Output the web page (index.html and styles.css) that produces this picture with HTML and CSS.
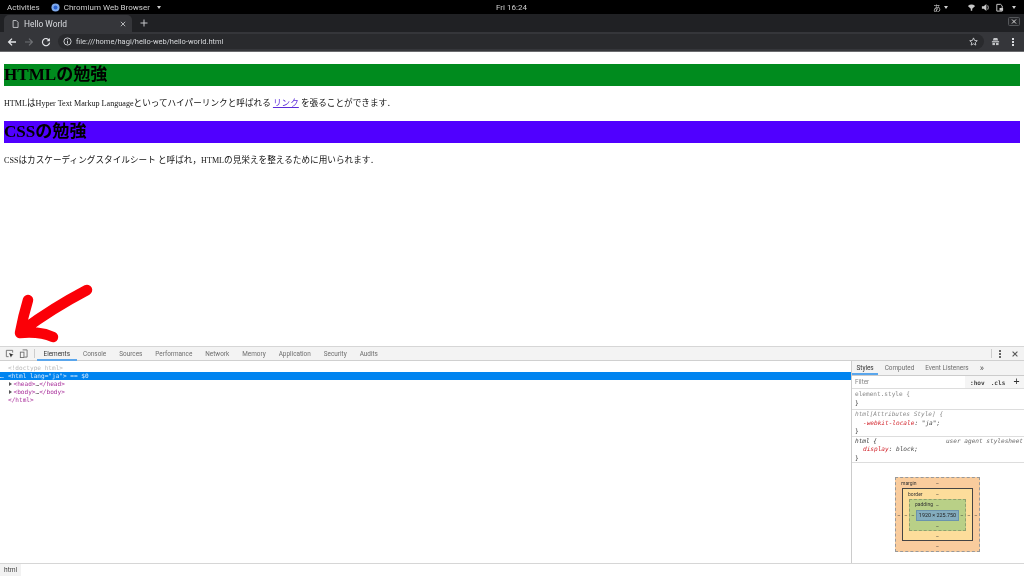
FILE: index.html
```html
<!DOCTYPE html>
<html lang="ja">
<head>
<meta charset="utf-8">
<title>Hello World</title>
<link rel="stylesheet" href="styles.css">
</head>
<body>
<div class="screen">
  <header class="topbar">
    <div class="top-left">
      <span>Activities</span>
      <span class="app-menu">
        <svg class="app-logo" viewBox="0 0 10 10"><circle cx="5" cy="5" r="4.5" fill="#7fa9ea"/><circle cx="5" cy="5" r="2.2" fill="#2a62d0"/></svg>
        Chromium Web Browser
        <i class="caret"></i>
      </span>
    </div>
    <div class="top-clock">Fri 16:24</div>
    <div class="top-right">
      <span class="ime">あ<i class="caret"></i></span>
      <span class="status">
        <svg class="st-icon" viewBox="0 0 10 10"><path d="M1 3.2 Q5 .2 9 3.2 L5.8 6.4 V8.6 H4.2 V6.4 Z" fill="#c8c8c8"/></svg>
        <svg class="st-icon" viewBox="0 0 10 10"><path d="M1 3.6H3L6 1V9L3 6.4H1Z" fill="#c8c8c8"/><path d="M7.2 2.6Q9.2 5 7.2 7.4" fill="none" stroke="#8a8a8a" stroke-width="1.2"/></svg>
        <svg class="st-icon" viewBox="0 0 10 10"><path d="M2 1.5H6.2L8 3.2V9H2Z" fill="none" stroke="#c8c8c8" stroke-width="1.1"/><path d="M5 5.5H9V8.5H5Z" fill="#c8c8c8"/></svg>
        <i class="caret"></i>
      </span>
    </div>
  </header>

  <div class="tabstrip">
    <div class="tab">
      <svg class="tab-doc" viewBox="0 0 8 10"><path d="M1 .7H5L7.2 2.9V9.3H1Z" fill="none" stroke="#dadce0" stroke-width="1"/></svg>
      <span class="tab-title">Hello World</span>
      <svg class="tab-close" viewBox="0 0 6 6"><path d="M.8.8 5.2 5.2M5.2.8.8 5.2" stroke="#b4b6b9" stroke-width="1"/></svg>
    </div>
    <svg class="tab-new" viewBox="0 0 8 8"><path d="M4 .5V7.5M.5 4H7.5" stroke="#c4c6c9" stroke-width="1"/></svg>
    <svg class="win-close" viewBox="0 0 12 9"><rect x=".5" y=".5" width="11" height="8" rx="1" fill="#26272a" stroke="#55575a"/><path d="M4 2.5 8 6.5M8 2.5 4 6.5" stroke="#dcdcdc"/></svg>
  </div>

  <div class="toolbar">
    <svg class="nav" viewBox="0 0 10 10"><path d="M9 5H2M5 1.6 1.6 5 5 8.4" fill="none" stroke="#e4e6e9" stroke-width="1.3"/></svg>
    <svg class="nav" viewBox="0 0 10 10"><path d="M1 5H8M5 1.6 8.4 5 5 8.4" fill="none" stroke="#6f7175" stroke-width="1.2"/></svg>
    <svg class="nav" viewBox="0 0 10 10"><path d="M8.2 3.4A3.6 3.6 0 1 0 8.6 5.6" fill="none" stroke="#e4e6e9" stroke-width="1.2"/><path d="M8.9 .9V4.3H5.6Z" fill="#e4e6e9"/></svg>
    <div class="omnibox">
      <svg class="info" viewBox="0 0 10 10"><circle cx="5" cy="5" r="4" fill="none" stroke="#dadce0" stroke-width="1"/><path d="M5 4.3V7.4M5 2.6V3.6" stroke="#dadce0" stroke-width="1"/></svg>
      <span class="url">file:///home/hagi/hello-web/hello-world.html</span>
      <svg class="star" viewBox="0 0 10 10"><path d="M5 1 6.2 3.8 9.2 4.1 7 6.1 7.6 9 5 7.5 2.4 9 3 6.1.8 4.1 3.8 3.8Z" fill="none" stroke="#dadce0" stroke-width=".9"/></svg>
    </div>
    <svg class="ext" viewBox="0 0 10 10"><path d="M3 1.2H7L8 4H2Z" fill="#c4c6c9"/><rect x="1" y="4.6" width="8" height="1.4" fill="#c4c6c9"/><rect x="1.6" y="6.6" width="2.8" height="2.4" fill="#c4c6c9"/><rect x="5.6" y="6.6" width="2.8" height="2.4" fill="#c4c6c9"/></svg>
    <span class="dots light"><i></i><i></i><i></i></span>
  </div>

  <main class="page">
    <h1 class="h-green">HTMLの勉強</h1>
    <p><span class="lat">HTML</span>は<span class="lat">Hyper Text Markup Language</span>といってハイパーリンクと呼ばれる <a href="#">リンク</a> を張ることができます．</p>
    <h1 class="h-purple">CSSの勉強</h1>
    <p><span class="lat">CSS</span>はカスケーディングスタイルシート と呼ばれ，<span class="lat">HTML</span>の見栄えを整えるために用いられます．</p>
    <svg class="arrow" viewBox="0 0 100 70"><path d="M79 10 C60 20 38 33 15 50 M20 20 C17 30 14 42 12 53 C24 52 34 52 45 57" fill="none" stroke="#fb0007" stroke-width="10.5" stroke-linecap="round" stroke-linejoin="round"/></svg>
  </main>

  <section class="devtools">
    <div class="dt-bar">
      <svg class="dt-icon" viewBox="0 0 10 10"><path d="M8.5 4V1.5H1.5V8.5H4" fill="none" stroke="#6e6e6e"/><path d="M4.5 4.5 9.5 6.4 7.6 7.2 6.6 9.4Z" fill="#333"/></svg>
      <svg class="dt-icon" viewBox="0 0 10 10"><path d="M4 1H9V9H6" fill="none" stroke="#6e6e6e"/><rect x="1.5" y="3.5" width="4" height="6" fill="none" stroke="#6e6e6e"/></svg>
      <span class="dt-sep"></span>
      <nav class="dt-tabs">
        <span class="dt-tab active">Elements</span>
        <span class="dt-tab">Console</span>
        <span class="dt-tab">Sources</span>
        <span class="dt-tab">Performance</span>
        <span class="dt-tab">Network</span>
        <span class="dt-tab">Memory</span>
        <span class="dt-tab">Application</span>
        <span class="dt-tab">Security</span>
        <span class="dt-tab">Audits</span>
      </nav>
      <span class="dt-sep right"></span>
      <span class="dots"><i></i><i></i><i></i></span>
      <svg class="dt-x" viewBox="0 0 6 6"><path d="M.6.6 5.4 5.4M5.4.6.6 5.4" stroke="#555" stroke-width="1.1"/></svg>
    </div>
    <div class="dt-main">
      <div class="dom">
        <div class="dom-line doctype">&lt;!doctype html&gt;</div>
        <div class="dom-line selected"><span class="ell">…</span>&lt;html lang="ja"&gt; == $0</div>
        <div class="dom-line kid"><i class="tri"></i><b>&lt;head&gt;</b><u>…</u><b>&lt;/head&gt;</b></div>
        <div class="dom-line kid"><i class="tri"></i><b>&lt;body&gt;</b><u>…</u><b>&lt;/body&gt;</b></div>
        <div class="dom-line end"><b>&lt;/html&gt;</b></div>
      </div>
      <aside class="side">
        <div class="side-tabs">
          <span class="side-tab active">Styles</span>
          <span class="side-tab">Computed</span>
          <span class="side-tab">Event Listeners</span>
          <span class="side-tab more">»</span>
        </div>
        <div class="filter">
          <span class="filter-box">Filter</span>
          <span class="filter-btn">:hov</span>
          <span class="filter-btn cls">.cls</span>
          <span class="filter-plus">+</span>
        </div>
        <div class="rule first">
          <div class="sel-grey">element.style {</div>
          <div>}</div>
        </div>
        <div class="rule">
          <div class="sel-it">html[Attributes Style] {</div>
          <div class="decl"><em>-webkit-locale</em>: "ja";</div>
          <div>}</div>
        </div>
        <div class="rule">
          <div class="rule-head"><span>html {</span><span class="ua">user agent stylesheet</span></div>
          <div class="decl"><em>display</em>: block;</div>
          <div>}</div>
        </div>
        <div class="box-wrap">
          <div class="bx bx-margin">
            <span class="bx-label">margin</span>
            <span class="d top">–</span><span class="d left">–</span>
            <div class="bx bx-border">
              <span class="bx-label">border</span>
              <span class="d top">–</span><span class="d left">–</span>
              <div class="bx bx-padding">
                <span class="bx-label">padding</span>
                <span class="d top">–</span><span class="d left">–</span>
                <div class="bx-content">1920 × 225.750</div>
                <span class="d right">–</span><span class="d bottom">–</span>
              </div>
              <span class="d right">–</span><span class="d bottom">–</span>
            </div>
            <span class="d right">–</span><span class="d bottom">–</span>
          </div>
        </div>
      </aside>
    </div>
    <footer class="crumbs"><span class="crumb">html</span></footer>
  </section>
</div>
</body>
</html>
```
FILE: styles.css
```css
* { box-sizing: border-box; }
html, body { margin: 0; padding: 0; }
.screen { width: 1024px; height: 576px; display: flex; flex-direction: column; overflow: hidden; background: #fff; font-family: Roboto, "Noto Sans CJK JP", sans-serif; filter: blur(0.3px); }

.topbar { height: 14px; background: #000; color: #cfcfcf; font-size: 8px; display: grid; grid-template-columns: 1fr auto 1fr; align-items: center; padding: 0 8px 0 7px; flex: none; }
.top-left { display: flex; align-items: center; gap: 11px; }
.app-menu { display: flex; align-items: center; gap: 4px; }
.app-logo { width: 9px; height: 9px; }
.caret { display: inline-block; width: 0; height: 0; border-left: 2.5px solid transparent; border-right: 2.5px solid transparent; border-top: 3px solid #cfcfcf; margin-left: 3px; }
.top-clock { text-align: center; }
.top-right { display: flex; justify-content: flex-end; align-items: center; gap: 19px; }
.ime { display: flex; align-items: center; font-size: 8px; }
.status { display: flex; align-items: center; gap: 5px; }
.st-icon { width: 9px; height: 9px; }

.tabstrip { height: 18px; background: #202124; display: flex; align-items: flex-end; padding-left: 4px; flex: none; color: #dadce0; }
.tab { width: 128px; height: 17px; background: #35363a; border-radius: 5px 5px 0 0; display: flex; align-items: center; padding: 0 6px 0 8px; font-size: 8.4px; }
.tab-doc { width: 7px; height: 8px; margin-right: 5px; }
.tab-title { flex: 1; }
.tab-close { width: 6px; height: 6px; }
.tab-new { width: 8px; height: 8px; margin: 0 0 5px 8px; }
.win-close { width: 12px; height: 9px; margin: 0 4px 6px auto; }

.toolbar { height: 20px; background: #35363a; display: flex; align-items: center; padding: 0 10px 0 7px; gap: 7px; flex: none; border-bottom: 1px solid #6a6b6e; }
.nav { width: 10px; height: 10px; }
.omnibox { flex: 1; height: 15px; background: #292a2d; border-radius: 8px; display: flex; align-items: center; padding: 0 5.5px 0 4.5px; }
.info { width: 9px; height: 9px; margin-right: 4.5px; }
.url { flex: 1; font-size: 7.5px; color: #d5d7da; }
.star { width: 9px; height: 9px; }
.ext { width: 9px; height: 9px; margin-right: 5.5px; }
.dots { display: inline-flex; flex-direction: column; gap: 1px; width: 2px; }
.dots i { width: 2px; height: 2px; background: #666; display: block; }
.dots.light i { background: #dadce0; }

.page { flex: 1; min-height: 0; position: relative; padding: 0 4px; font-family: "Liberation Serif", "Noto Sans CJK JP", serif; font-size: 8.65px; color: #000; display: flow-root; }
.page h1 { font-size: 17.07px; font-weight: bold; line-height: 22px; height: 22px; margin: 12px 0 0; }
.page p { margin: 11px 0 11px; line-height: 12px; color: #111; }
.lat { font-size: 8.1px; }
.h-green { background: #008b1e; }
.h-purple { background: #5000ff; }
.page h1.h-purple { margin-top: 0; }
.page a { color: #5b2bd8; }
.arrow { position: absolute; left: 8px; top: 228px; width: 100px; height: 70px; }

.devtools { height: 230px; flex: none; display: flex; flex-direction: column; font-size: 6.4px; color: #333; background: #fff; }
.dt-bar { height: 15px; background: #f3f3f3; border-top: 1px solid #d6d6d6; border-bottom: 1px solid #d0d0d0; display: flex; align-items: center; padding: 0 5px; gap: 4px; flex: none; }
.dt-icon { width: 9px; height: 9px; margin-right: 1px; }
.dt-sep { width: 1px; height: 9px; background: #ccc; margin: 0 0 0 1px; }
.dt-sep.right { margin-left: auto; margin-right: 3px; }
.dt-tabs { display: flex; height: 100%; margin-left: -2px; }
.dt-tab { padding: 0 6.5px; display: flex; align-items: center; color: #6e6e6e; white-space: nowrap; }
.dt-tab.active { color: #333; border-bottom: 2px solid #5aa6ec; padding-top: 2px; margin-bottom: -1px; }
.dt-x { width: 6px; height: 6px; margin-left: 7px; margin-right: 1px; }

.dt-main { flex: 1; min-height: 0; display: flex; }
.dom { flex: 1; font-family: "DejaVu Sans Mono", "Liberation Mono", monospace; font-size: 6.1px; padding-top: 3px; color: #888; min-width: 0; }
.dom-line { height: 8px; line-height: 8px; padding-left: 8px; white-space: nowrap; }
.dom-line.doctype { color: #b9b9b9; }
.dom-line.selected { background: #0084f0; color: #dcebfb; padding-left: 0; height: 7.5px; line-height: 7.5px; }
.ell { display: inline-block; width: 8px; }
.dom-line.kid { padding-left: 9px; display: flex; align-items: center; }
.dom b { font-weight: normal; color: #a9309b; }
.dom u { text-decoration: none; color: #555; }
.tri { width: 0; height: 0; border-top: 2px solid transparent; border-bottom: 2px solid transparent; border-left: 3.5px solid #555; margin-right: 1.5px; }

.side { width: 173px; flex: none; border-left: 1px solid #ccc; display: flex; flex-direction: column; font-family: "DejaVu Sans Mono", "Liberation Mono", monospace; font-size: 6.1px; color: #222; }
.side-tabs { height: 15px; background: #f3f3f3; border-bottom: 1px solid #ccc; display: flex; padding-left: 0; font-family: Roboto, sans-serif; font-size: 6.4px; flex: none; }
.side-tab { padding: 0 5.5px; display: flex; align-items: center; color: #6e6e6e; }
.side-tab.active { color: #333; border-bottom: 2px solid #5aa6ec; padding: 1px 4.5px 0; margin-right: 1px; }
.side-tab.more { font-size: 9px; color: #555; }
.filter { height: 13px; display: flex; align-items: center; border-bottom: 1px solid #ddd; padding: 0 2px 0 0; flex: none; background: #f5f5f5; }
.filter-box { width: 113px; height: 100%; display: flex; align-items: center; font-family: Roboto, sans-serif; font-size: 6.4px; color: #888; background: #fff; padding-left: 3px; margin-right: 5px; }
.filter-btn { font-weight: bold; color: #444; margin-right: 6px; }
.filter-btn.cls { margin-right: 8px; }
.filter-plus { font-size: 10px; color: #333; line-height: 10px; }
.rule { padding: 0 3px; line-height: 8.5px; border-bottom: 1px solid #ddd; flex: none; color: #333; white-space: nowrap; }
.rule.first { padding: 1px 3px 2px; }
.sel-grey { color: #888; }
.sel-it { color: #888; font-style: italic; }
.decl { padding-left: 8px; font-style: italic; color: #444; }
.decl em { color: #d01c24; }
.rule-head { display: flex; justify-content: space-between; font-style: italic; margin-right: -2px; }
.ua { color: #666; }

.box-wrap { flex: 1; display: flex; justify-content: center; padding-top: 14px; padding-right: 1px; font-family: Roboto, sans-serif; font-size: 5px; color: #333; }
.bx { position: relative; display: grid; justify-items: center; align-items: center; }
.bx-margin { width: 85px; height: 75px; background: #f9cc9d; border: 1px dashed #999; grid-template: 10px 1fr 10px / 6px 1fr 6px; align-self: flex-start; }
.bx-border { width: 71px; height: 53px; background: #fddd9b; border: 1px solid #444; grid-template: 10px 1fr 10px / 6px 1fr 6px; }
.bx-padding { width: 57px; height: 32px; background: #b9d087; border: 1px dashed #8fa070; grid-template: 9px 1fr 9px / 6px 1fr 6px; }
.bx-content { width: 43px; height: 11px; background: #84adbf; border: 1px solid #6b94ad; display: flex; align-items: center; justify-content: center; grid-area: 2 / 2; color: #222; white-space: nowrap; font-size: 5.4px; }
.bx > .bx { grid-area: 2 / 2; }
.bx-label { position: absolute; left: 5px; top: 1px; line-height: 8px; }
.bx-padding .bx-label { top: 0; }
.d.top { grid-area: 1 / 2; }
.d.left { grid-area: 2 / 1; }
.d.right { grid-area: 2 / 3; }
.d.bottom { grid-area: 3 / 2; }

.crumbs { height: 13px; flex: none; border-top: 1px solid #d6d6d6; background: #fff; display: flex; }
.crumb { background: #f2f2f2; padding: 0 4px; display: flex; align-items: center; font-size: 6.6px; color: #444; width: 21px; }
```
